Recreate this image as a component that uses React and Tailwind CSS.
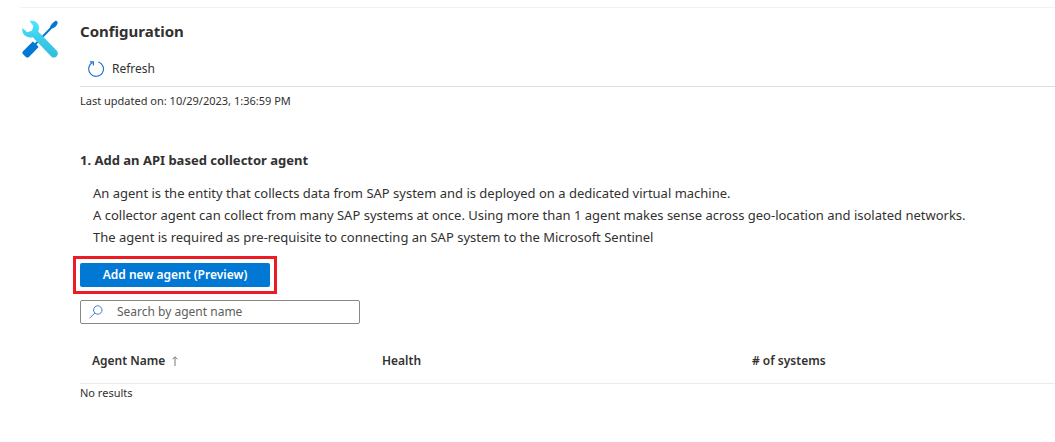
import React from "react";

function ToolsIcon() {
  return (
    <svg viewBox="0 0 36 38" className="h-[38px] w-9 shrink-0" aria-hidden="true">
      <defs>
        <linearGradient id="wrench" x1="0" y1="0" x2="0" y2="1">
          <stop offset="0" stopColor="#50e6ff" />
          <stop offset="0.5" stopColor="#3ccbe8" />
          <stop offset="1" stopColor="#32bedd" />
        </linearGradient>
      </defs>
      <path
        d="M34 0.4L35.8 2.2C35.6 4 34.4 6 32.8 7.2L30 8.6L14.4 24.6L16.6 27L7 37Q5.2 38.2 3.9 37L0.9 34Q-0.2 32.6 1 31.2L10.8 21.4L13 23.2L27.8 7.8C28.4 5.2 31 2 34 0.4Z"
        fill="#0078d4"
      />
      <path
        d="M7.6 1C11.8 0 15.4 2 16.6 5.6C17.2 7.6 17 9.8 16.2 11.6L34.8 30.8C36.2 32.4 36.2 34.6 34.8 36.2C33.2 38 30.8 38 29.2 36.4L10.8 17.2C7.2 18 3.2 16.6 1.2 13.4C0.2 11.6 0 9.8 0.4 8L5.2 12.2L10 10.8L11.4 6Z"
        fill="url(#wrench)"
      />
    </svg>
  );
}

function RefreshIcon() {
  return (
    <svg viewBox="0 0 16 16" className="size-4" fill="none" stroke="#1f6fd0" strokeWidth="1.1" aria-hidden="true">
      <path d="M10.4 0.9A7.4 7.4 0 1 1 4.6 1.4" />
      <path d="M1.9 0.9H5.4V4.6" />
    </svg>
  );
}

function SearchIcon() {
  return (
    <svg viewBox="0 0 14 14" className="size-3.5" fill="none" stroke="#3f7fd6" strokeWidth="1" aria-hidden="true">
      <circle cx="8.8" cy="5" r="4.2" />
      <path d="M5.8 8L0.5 13.3" />
    </svg>
  );
}

function SortArrow() {
  return (
    <svg viewBox="0 0 8 10" className="h-2.5 w-2" fill="none" stroke="#7a7875" strokeWidth="1" aria-hidden="true">
      <path d="M4 10V1M1.5 3.3L4 0.8L6.5 3.3" />
    </svg>
  );
}

export default function App() {
  return (
    <main className="pt-[7px] pl-5 font-['Noto_Sans','Open_Sans',sans-serif] text-xs leading-5 text-[#323130]">
      <div className="flex gap-5 border-t border-[#f3f2f1] pt-3">
        <div className="flex w-10 shrink-0 justify-center">
          <ToolsIcon />
        </div>
        <div className="min-w-0 grow">
          <header className="flex h-[67px] flex-col justify-between border-b border-[#e1dfdd] pb-[7px]">
            <h1 className="text-[15px] leading-[22px] font-bold">Configuration</h1>
            <button type="button" className="flex items-center gap-2 self-start pl-2">
              <RefreshIcon />
              Refresh
            </button>
          </header>
          <p className="pt-1 text-[11px] leading-5">Last updated on: 10/29/2023, 1:36:59 PM</p>

          <section className="pt-[39px]">
            <h2 className="text-[13px] leading-5 font-bold">1. Add an API based collector agent</h2>
            <div className="pt-3 pl-[13px] text-[13px] leading-[22px]">
              <p>An agent is the entity that collects data from SAP system and is deployed on a dedicated virtual machine.</p>
              <p>A collector agent can collect from many SAP systems at once. Using more than 1 agent makes sense across geo-location and isolated networks.</p>
              <p>The agent is required as pre-requisite to connecting an SAP system to the Microsoft Sentinel</p>
            </div>
            <div className="-ml-[7px] mt-2 w-fit border-3 border-[#ed1c24] p-1">
              <button type="button" className="block h-6 w-[190px] rounded-xs bg-[#0078d4] text-xs font-semibold text-white">
                Add new agent (Preview)
              </button>
            </div>
            <label className="mt-1.5 flex h-6 w-[280px] items-center gap-3.5 rounded-xs border border-[#8a8886] pl-2">
              <SearchIcon />
              <input
                type="text"
                aria-label="Search by agent name"
                placeholder="Search by agent name"
                className="min-w-0 grow bg-transparent outline-none placeholder:text-[#605e5c]"
              />
            </label>
            <table className="mt-4 w-full table-fixed text-left">
              <thead>
                <tr className="h-[43px] border-b border-[#edebe9]">
                  <th className="w-[290px] pl-3 font-semibold">
                    <span className="flex items-center gap-1.5">
                      Agent Name
                      <SortArrow />
                    </span>
                  </th>
                  <th className="w-[370px] pl-3 font-semibold">Health</th>
                  <th className="pl-3 font-semibold"># of systems</th>
                </tr>
              </thead>
              <tbody>
                <tr>
                  <td colSpan={3} className="text-[11px] leading-[18px]">No results</td>
                </tr>
              </tbody>
            </table>
          </section>
        </div>
      </div>
    </main>
  );
}
